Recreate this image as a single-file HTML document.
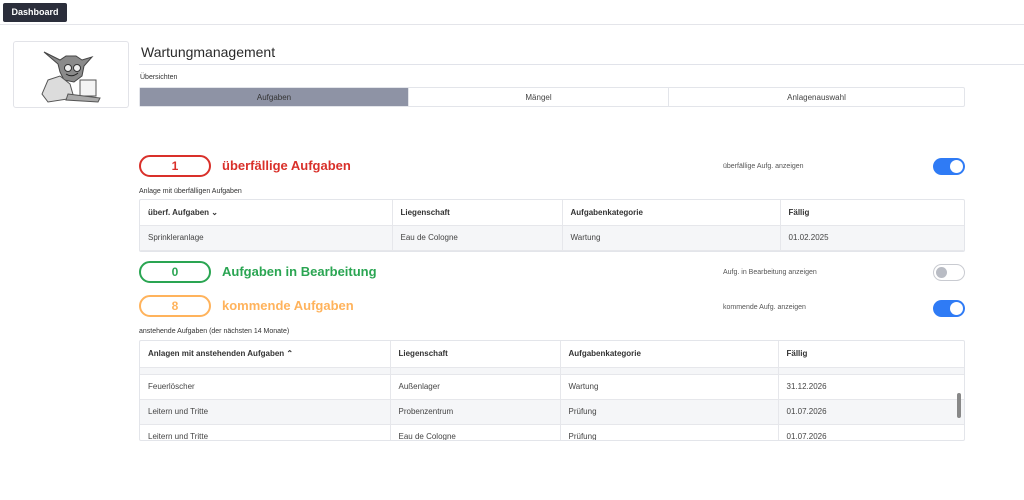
<!DOCTYPE html>
<html><head><meta charset="utf-8"><style>
*{margin:0;padding:0;box-sizing:border-box}
body{width:1024px;height:500px;background:#fff;font-family:"Liberation Sans",sans-serif;color:#333;position:relative;overflow:hidden}
.a{position:absolute}
.btn{left:3px;top:3px;width:64px;height:19px;background:#2b2e3b;color:#fff;font-size:9px;font-weight:bold;text-align:center;line-height:19px;border-radius:2px}
.hr{left:0;top:24px;width:1024px;height:1px;background:#e4e5ea}
.logo{left:13px;top:41px;width:116px;height:67px;border:1px solid #e2e3e8;border-radius:3px}
.title{left:141px;top:44px;font-size:14px;color:#2a2a2a}
.ul{left:139px;top:64px;width:885px;height:1px;background:#e1e3ea}
.small{font-size:7px;color:#333}
.tabs{left:139px;top:87px;width:826px;height:20px;border:1px solid #e3e5ea;border-radius:2px;display:flex;font-size:8px;color:#444}
.tabs div{text-align:center;line-height:19px;border-right:1px solid #e3e5ea}
.pill{width:72px;height:22px;border:2px solid;border-radius:11px;text-align:center;font-size:12px;font-weight:bold;line-height:18px}
.big{font-size:13px;font-weight:bold}
.tog{width:32px;height:17px;border-radius:9px}
.tog.on{background:#2f7bf5}
.tog.on:after{content:"";position:absolute;right:2px;top:2px;width:13px;height:13px;border-radius:50%;background:#fff}
.tog.off{background:#fff;border:1px solid #c9cbd1}
.tog.off:after{content:"";position:absolute;left:2px;top:2px;width:11px;height:11px;border-radius:50%;background:#b9bcc4}
table{border-collapse:collapse;width:100%;font-size:8px;table-layout:fixed}
.t{left:139px;width:826px;border:1px solid #e3e5ea;border-radius:2px;overflow:hidden}
td{border-right:1px solid #e6e7eb;border-bottom:1px solid #e6e7eb;padding-left:8px;color:#444}
th{border-right:1px solid #e6e7eb;border-bottom:1px solid #e6e7eb;padding-left:8px;text-align:left;font-weight:bold;color:#333}
td:last-child,th:last-child{border-right:none}
.g td{background:#f5f6f8}
</style></head><body>
<div class="a btn">Dashboard</div>
<div class="a hr"></div>
<div class="a logo"><svg width="116" height="67" viewBox="0 0 116 67">
<path d="M30 10 L46 18 L52 14 L62 14 L68 18 L78 15 L70 24 L68 34 L60 40 L50 38 L46 30 L44 22 Z" fill="#8a8a8a" stroke="#444" stroke-width="1"/>
<path d="M34 38 L46 34 L56 42 L60 56 L34 60 L28 52 Z" fill="#dcdcdc" stroke="#555" stroke-width="1"/>
<circle cx="54" cy="26" r="3.5" fill="#eee" stroke="#333"/><circle cx="63" cy="26" r="3.5" fill="#eee" stroke="#333"/>
<path d="M52 32 Q58 36 64 31" stroke="#222" fill="none"/>
<rect x="66" y="38" width="16" height="16" fill="#f4f4f4" stroke="#555"/>
<path d="M54 52 L86 56 L84 60 L52 58 Z" fill="#aaa" stroke="#555"/>
</svg></div>
<div class="a title">Wartungmanagement</div>
<div class="a ul"></div>
<div class="a small" style="left:140px;top:74px">Übersichten</div>
<div class="a tabs"><div style="width:269px;background:#8e93a5;color:#333">Aufgaben</div><div style="width:260px">Mängel</div><div style="flex:1;border-right:none">Anlagenauswahl</div></div>

<div class="a pill" style="left:139px;top:155px;border-color:#d9302a;color:#d9302a">1</div>
<div class="a big" style="left:222px;top:158px;color:#d9302a">überfällige Aufgaben</div>
<div class="a small" style="left:723px;top:163px;color:#555">überfällige Aufg. anzeigen</div>
<div class="a tog on" style="left:933px;top:158px"></div>
<div class="a small" style="left:139px;top:188px">Anlage mit überfälligen Aufgaben</div>
<div class="a t" style="top:199px"><table>
<colgroup><col style="width:252px"><col style="width:170px"><col style="width:218px"><col></colgroup>
<tr style="height:25px"><th>überf. Aufgaben ⌄</th><th>Liegenschaft</th><th>Aufgabenkategorie</th><th>Fällig</th></tr>
<tr class="g" style="height:25px"><td>Sprinkleranlage</td><td>Eau de Cologne</td><td>Wartung</td><td>01.02.2025</td></tr>
</table></div>

<div class="a pill" style="left:139px;top:261px;border-color:#2aa552;color:#2aa552">0</div>
<div class="a big" style="left:222px;top:264px;color:#2aa552">Aufgaben in Bearbeitung</div>
<div class="a small" style="left:723px;top:269px;color:#555">Aufg. in Bearbeitung anzeigen</div>
<div class="a tog off" style="left:933px;top:264px"></div>

<div class="a pill" style="left:139px;top:295px;border-color:#ffb35c;color:#ffb35c">8</div>
<div class="a big" style="left:222px;top:298px;color:#ffb35c">kommende Aufgaben</div>
<div class="a small" style="left:723px;top:304px;color:#555">kommende Aufg. anzeigen</div>
<div class="a tog on" style="left:933px;top:300px"></div>
<div class="a small" style="left:139px;top:328px">anstehende Aufgaben (der nächsten 14 Monate)</div>
<div class="a t" style="top:340px;height:101px"><table>
<colgroup><col style="width:250px"><col style="width:170px"><col style="width:218px"><col></colgroup>
<tr style="height:26px"><th>Anlagen mit anstehenden Aufgaben ⌃</th><th>Liegenschaft</th><th>Aufgabenkategorie</th><th>Fällig</th></tr>
<tr class="g" style="height:7px"><td></td><td></td><td></td><td></td></tr>
<tr style="height:25px"><td>Feuerlöscher</td><td>Außenlager</td><td>Wartung</td><td>31.12.2026</td></tr>
<tr class="g" style="height:25px"><td>Leitern und Tritte</td><td>Probenzentrum</td><td>Prüfung</td><td>01.07.2026</td></tr>
<tr style="height:25px"><td>Leitern und Tritte</td><td>Eau de Cologne</td><td>Prüfung</td><td>01.07.2026</td></tr>
</table></div>
<div class="a" style="left:957px;top:393px;width:4px;height:25px;background:#888;border-radius:2px"></div>
</body></html>
